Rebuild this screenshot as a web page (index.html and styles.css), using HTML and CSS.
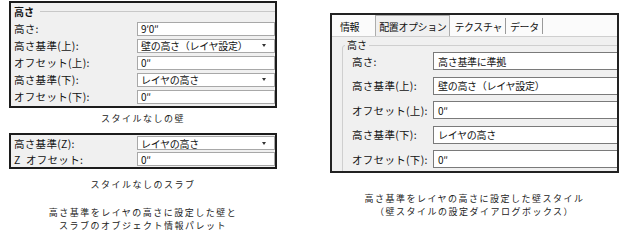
FILE: index.html
```html
<!DOCTYPE html>
<html lang="ja">
<head>
<meta charset="utf-8">
<title>高さ基準</title>
<link rel="stylesheet" href="styles.css">
</head>
<body>
<div class="page">
  <div class="col-left">
    <div class="pal pal-wall">
      <div class="legend"><span>高さ</span><i class="rule"></i></div>
      <div class="row"><span class="lbl">高さ:</span><span class="fld">9′0″</span></div>
      <div class="row"><span class="lbl">高さ基準(上):</span><span class="fld">壁の高さ（レイヤ設定）<i class="arrow"></i></span></div>
      <div class="row"><span class="lbl">オフセット(上):</span><span class="fld">0″</span></div>
      <div class="row"><span class="lbl">高さ基準(下):</span><span class="fld">レイヤの高さ<i class="arrow"></i></span></div>
      <div class="row"><span class="lbl">オフセット(下):</span><span class="fld">0″</span></div>
    </div>
    <p class="cap cap-wall">スタイルなしの壁</p>
    <div class="pal pal-slab">
      <div class="row row-slab"><span class="lbl">高さ基準(Z):</span><span class="fld">レイヤの高さ<i class="arrow"></i></span></div>
      <div class="row row-slab"><span class="lbl">Z&nbsp;&nbsp;オフセット:</span><span class="fld">0″</span></div>
    </div>
    <p class="cap cap-slab">スタイルなしのスラブ</p>
    <p class="cap cap-both">高さ基準をレイヤの高さに設定した壁と<br>スラブのオブジェクト情報パレット</p>
  </div>
  <div class="col-right">
    <div class="dlg">
      <div class="tabs">
        <span class="tab tab-first">情報</span>
        <span class="tab tab-on">配置オプション</span>
        <span class="tab tab-sep">テクスチャ</span>
        <span class="tab tab-sep">データ</span>
      </div>
      <div class="pane">
        <fieldset class="group">
          <legend>高さ</legend>
          <div class="rrow"><span class="lbl">高さ:</span><span class="rfld">高さ基準に準拠</span></div>
          <div class="rrow"><span class="lbl">高さ基準(上):</span><span class="rfld">壁の高さ（レイヤ設定）</span></div>
          <div class="rrow"><span class="lbl">オフセット(上):</span><span class="rfld">0″</span></div>
          <div class="rrow"><span class="lbl">高さ基準(下):</span><span class="rfld">レイヤの高さ</span></div>
          <div class="rrow"><span class="lbl">オフセット(下):</span><span class="rfld">0″</span></div>
        </fieldset>
      </div>
    </div>
    <p class="cap cap-style">高さ基準をレイヤの高さに設定した壁スタイル<br>（壁スタイルの設定ダイアログボックス）</p>
  </div>
</div>
</body>
</html>
```
FILE: styles.css
```css
body {
  margin: 0;
  background: #fff;
  color: #111;
  font-family: "Noto Sans CJK JP", "Noto Sans", sans-serif;
}
.page {
  display: flex;
  align-items: flex-start;
  padding-left: 9px;
}
.col-left {
  width: 268px;
  padding-top: 1px;
}
.pal {
  background: #f0f0f0;
  border: 2px solid #1c1c1c;
  box-sizing: border-box;
  padding-left: 3px;
}
.pal-wall {
  height: 107px;
}
.legend {
  display: flex;
  align-items: center;
  gap: 6px;
  height: 17px;
  font-size: 10px;
  font-weight: bold;
}
.rule {
  flex: 1;
  height: 1px;
  background: #c8c8c8;
}
.row {
  display: grid;
  grid-template-columns: 123px 138px;
  align-items: center;
  height: 17px;
  font-size: 10px;
}
.row .lbl {
  font-size: 10.5px;
  letter-spacing: 0.3px;
}
.row-slab {
  height: 16px;
}
.lbl {
  white-space: nowrap;
}
.fld {
  display: flex;
  align-items: center;
  height: 14px;
  box-sizing: border-box;
  border: 1px solid #a8a8a8;
  background: #fff;
  padding-left: 3px;
  white-space: nowrap;
  letter-spacing: -0.3px;
}
.arrow {
  margin-left: auto;
  margin-right: 8px;
  width: 0;
  height: 0;
  border-left: 2.5px solid transparent;
  border-right: 2.5px solid transparent;
  border-top: 3px solid #333;
}
.pal-slab {
  height: 36px;
  margin-top: 8px;
}
.cap {
  margin: 0;
  text-align: center;
  font-size: 9px;
  letter-spacing: 1.5px;
  line-height: 13px;
  color: #222;
}
.cap-wall {
  margin-top: 4px;
}
.cap-slab {
  margin-top: 9px;
}
.cap-both {
  margin-top: 15px;
}
.col-right {
  width: 289px;
  margin-left: 53px;
  padding-top: 13px;
}
.dlg {
  height: 160px;
  box-sizing: border-box;
  border: 2px solid #222;
  background: #f0f0f0;
  overflow: hidden;
}
.tabs {
  display: flex;
  align-items: flex-end;
  height: 21px;
  background: #fbfbfb;
  font-size: 10px;
  letter-spacing: -0.4px;
}
.tab {
  display: flex;
  align-items: center;
  height: 19px;
  padding: 0 3px;
  white-space: nowrap;
}
.tab-first {
  margin-left: 4px;
  padding: 0 4px;
  margin-right: 12px;
}
.tab-on {
  height: 21px;
  box-sizing: border-box;
  border: 1px solid #adadad;
  border-bottom: none;
  background: #f0f0f0;
}
.tab-sep {
  height: 16px;
  margin-bottom: 2px;
  border-right: 1px solid #9a9a9a;
  padding: 0 3px 0 4px;
}
.pane {
  border-top: 1px solid #cfcfcf;
  padding: 2px 0 0 10px;
}
.group {
  margin: 0;
  width: 400px;
  border: 1px solid #cfcfcf;
  border-radius: 3px;
  padding: 0 0 10px 9px;
}
.group legend {
  margin-left: -7px;
  padding: 0 2px;
  font-size: 10px;
  line-height: 12px;
}
.rrow {
  display: grid;
  grid-template-columns: 81px 300px;
  align-items: center;
  height: 18px;
  margin-top: 6.5px;
  font-size: 10px;
}
.rrow .lbl {
  font-size: 10.5px;
  letter-spacing: 0.3px;
}
.rrow:first-of-type {
  margin-top: 1px;
}
.rfld {
  display: flex;
  align-items: center;
  height: 18px;
  box-sizing: border-box;
  border: 1px solid #7a7a7a;
  background: #fff;
  padding-left: 4px;
  white-space: nowrap;
  letter-spacing: -0.3px;
}
.cap-style {
  margin-top: 19px;
}
```
